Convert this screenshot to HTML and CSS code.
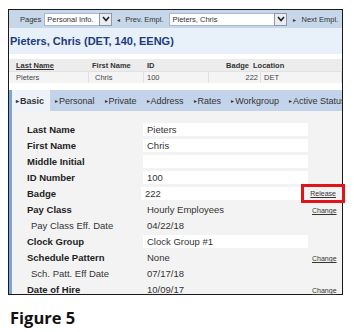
FILE: index.html
```html
<!DOCTYPE html>
<html lang="en">
<head>
    <meta charset="UTF-8">
    <title>Employee - Basic</title>
    <link rel="stylesheet" href="styles.css">
</head>
<body>
    <div class="frame">
        <!-- Toolbar -->
        <div class="toolbar">
            <span class="tool-label">Pages</span>
            <div class="picker picker-pages">
                <span class="picker-text">Personal Info.</span>
                <span class="picker-btn"><svg width="8" height="6" viewBox="0 0 8 6"><path d="M1 1 L4 4.5 L7 1" fill="none" stroke="#222" stroke-width="1.6"/></svg></span>
            </div>
            <span class="nav-link nav-prev"><span class="arrow">&#9666;</span>Prev. Empl.</span>
            <div class="picker picker-empl">
                <span class="picker-text">Pieters, Chris</span>
                <span class="picker-btn"><svg width="8" height="6" viewBox="0 0 8 6"><path d="M1 1 L4 4.5 L7 1" fill="none" stroke="#222" stroke-width="1.6"/></svg></span>
            </div>
            <span class="nav-link nav-next"><span class="arrow">&#9656;</span>Next Empl.</span>
        </div>

        <!-- Employee title -->
        <div class="emp-title">Pieters, Chris (DET, 140, EENG)</div>

        <!-- Search grid -->
        <div class="grid">
            <div class="grid-row grid-head">
                <div class="c-last"><u>Last Name</u></div>
                <div class="c-first">First Name</div>
                <div class="c-id">ID</div>
                <div class="c-badge">Badge</div>
                <div class="c-loc">Location</div>
            </div>
            <div class="grid-row grid-data">
                <div class="c-last">Pieters</div>
                <div class="c-first">Chris</div>
                <div class="c-id">100</div>
                <div class="c-badge">222</div>
                <div class="c-loc">DET</div>
            </div>
        </div>

        <div class="detail">
            <!-- Tabs -->
            <div class="tabs">
                <div class="tab active"><span class="tri">&#9656;</span>Basic</div>
                <div class="tab"><span class="tri">&#9656;</span>Personal</div>
                <div class="tab"><span class="tri">&#9656;</span>Private</div>
                <div class="tab"><span class="tri">&#9656;</span>Address</div>
                <div class="tab"><span class="tri">&#9656;</span>Rates</div>
                <div class="tab"><span class="tri">&#9656;</span>Workgroup</div>
                <div class="tab"><span class="tri">&#9656;</span>Active Status</div>
            </div>

            <!-- Basic fields -->
            <div class="content">
                <div class="field"><span class="label">Last Name</span><span class="value boxed">Pieters</span><span class="action"></span></div>
                <div class="field"><span class="label">First Name</span><span class="value boxed">Chris</span><span class="action"></span></div>
                <div class="field"><span class="label">Middle Initial</span><span class="value boxed"></span><span class="action"></span></div>
                <div class="field"><span class="label">ID Number</span><span class="value boxed">100</span><span class="action"></span></div>
                <div class="field"><span class="label">Badge</span><span class="value boxed">222</span><span class="action"><a class="link highlight">Release</a></span></div>
                <div class="field"><span class="label">Pay Class</span><span class="value">Hourly Employees</span><span class="action"><a class="link">Change</a></span></div>
                <div class="field sub"><span class="label">Pay Class Eff. Date</span><span class="value">04/22/18</span><span class="action"></span></div>
                <div class="field"><span class="label">Clock Group</span><span class="value boxed">Clock Group #1</span><span class="action"></span></div>
                <div class="field"><span class="label">Schedule Pattern</span><span class="value">None</span><span class="action"><a class="link">Change</a></span></div>
                <div class="field sub"><span class="label">Sch. Patt. Eff Date</span><span class="value">07/17/18</span><span class="action"></span></div>
                <div class="field"><span class="label">Date of Hire</span><span class="value">10/09/17</span><span class="action"><a class="link">Change</a></span></div>
            </div>
        </div>
    </div>

    <div class="caption">Figure 5</div>
</body>
</html>
```

FILE: styles.css
```css
:root {
    --toolbar-bg: #c7d7ea;
    --title-bg: #e8f0fa;
    --title-color: #1d3b7a;
    --tab-bg: #c3d4ea;
    --panel-bg: #f3f3f3;
    --text: #2b2b2b;
}

* {
    margin: 0;
    padding: 0;
    box-sizing: border-box;
}

body {
    background: white;
    font-family: 'Liberation Sans', Arial, sans-serif;
    color: var(--text);
}

.frame {
    width: 335px;
    height: 286px;
    margin: 9px 0 0 8px;
    border: 1px solid #1a1a1a;
    background: white;
}

/* Toolbar */
.toolbar {
    height: 18px;
    background: var(--toolbar-bg);
    display: flex;
    align-items: center;
    font-size: 7.5px;
    color: #333;
    padding-left: 11px;
    white-space: nowrap;
}

.tool-label {
    margin-right: 3px;
}

.picker {
    display: flex;
    align-items: center;
    height: 13px;
    background: white;
    border: 1px solid #a9b8cc;
}

.picker-text {
    flex: 1;
    padding-left: 2px;
}

.picker-btn {
    width: 13px;
    height: 13px;
    margin: -1px -1px -1px 0;
    display: flex;
    align-items: center;
    justify-content: center;
    background: #e9edf2;
    border: 1px solid #8d99a8;
}

.picker-pages {
    width: 68px;
}

.picker-empl {
    width: 118px;
}

.nav-link {
    color: #333;
}

.nav-prev {
    margin: 0 6px 0 5px;
}

.nav-next {
    margin-left: 6px;
}

.nav-link .arrow {
    font-size: 6px;
    margin-right: 5px;
}

/* Title */
.emp-title {
    height: 26px;
    background: var(--title-bg);
    color: var(--title-color);
    font-weight: bold;
    font-size: 11px;
    padding: 7px 0 0 1px;
}

/* Grid */
.grid {
    padding-top: 5px;
    font-size: 7.5px;
}

.grid-row {
    display: grid;
    height: 12px;
    align-items: center;
}

.grid-head {
    grid-template-columns: 80px 55px 65px 42px 1fr;
    background: #ececec;
    font-weight: bold;
    color: #333;
}

.grid-data {
    grid-template-columns: 80px 55px 65px 52px 1fr;
    background: #f4f4f4;
    border-top: 1px solid #e2e2e2;
    color: #444;
}

.grid-row > div {
    padding-left: 7px;
}

.grid-data > div {
    border-right: 1px solid #e0e0e0;
    height: 100%;
    display: flex;
    align-items: center;
}

.grid-row .c-first,
.grid-row .c-id {
    padding-left: 3px;
}

.grid-data .c-first {
    padding-left: 6px;
}

.grid-row .c-badge {
    text-align: right;
    justify-content: flex-end;
    padding: 0 2px 0 0;
}

.grid-row .c-loc {
    padding-left: 2px;
}

.grid-data .c-loc {
    padding-left: 3px;
}

/* Detail panel: tabs + fields */
.detail {
    margin-top: 7px;
    border-left: 3px solid #7ea4d8;
}

.tabs {
    height: 21px;
    background: var(--tab-bg);
    display: flex;
    font-size: 9px;
    color: #333;
    white-space: nowrap;
    overflow: hidden;
}

.tab {
    display: flex;
    align-items: center;
    padding: 0 5px;
}

.tab .tri {
    font-size: 6px;
    margin-right: 1px;
}

.tab.active {
    background: #eef3fa;
    font-weight: bold;
    padding: 0 6px 0 4px;
}

.content {
    background: var(--panel-bg);
    padding: 10px 0 0 15px;
    height: 183px;
}

.field {
    display: flex;
    align-items: center;
    height: 16.1px;
    font-size: 9.5px;
}

.label {
    width: 116px;
    font-weight: bold;
    color: #222;
}

.field.sub .label {
    font-weight: normal;
    padding-left: 4px;
    color: #333;
}

.value {
    width: 165px;
    height: 13px;
    padding-left: 4px;
    display: flex;
    align-items: center;
    color: #333;
}

.value.boxed {
    background: white;
}

.action {
    padding-left: 4px;
}

.link {
    font-size: 7px;
    color: #333;
    text-decoration: underline;
}

.link.highlight {
    display: inline-block;
    margin-left: -3px;
    padding: 3px 6px;
    outline: 3px solid #e2141a;
}

/* Caption */
.caption {
    margin: 11px 0 0 10px;
    font-family: 'Open Sans', 'Liberation Sans', sans-serif;
    font-weight: bold;
    font-size: 16.5px;
    color: #111;
}
```
